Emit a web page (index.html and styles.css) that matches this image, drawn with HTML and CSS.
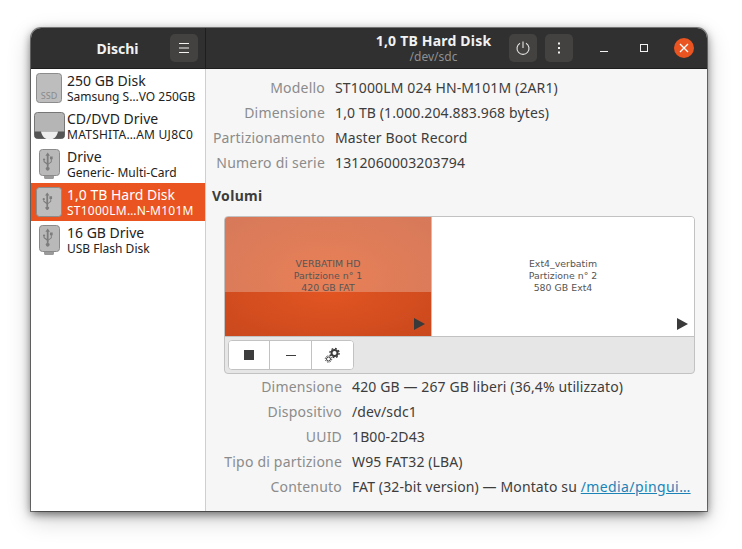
FILE: index.html
```html
<!DOCTYPE html>
<html lang="it">
<head>
<meta charset="utf-8">
<title>Dischi</title>
<link rel="stylesheet" href="styles.css">
</head>
<body>
<div class="window">
    <header class="titlebar">
        <div class="bar-left">
            <span class="app-title">Dischi</span>
            <button class="hbtn">
                <svg width="16" height="16" viewBox="0 0 16 16"><path d="M3 3.500h10M3 8h10M3 12.500h10" stroke="#f2f2f2" stroke-width="1"/></svg>
            </button>
        </div>
        <div class="bar-right">
            <div class="bar-title">
                <div class="disk-name">1,0 TB Hard Disk</div>
                <div class="disk-path">/dev/sdc</div>
            </div>
            <div class="bar-actions">
                <button class="hbtn">
                    <svg width="16" height="16" viewBox="0 0 16 16" fill="none" stroke="#e6e6e6" stroke-width="1.100"><path d="M8 1.500v6.500"/><path d="M5 3.200a6 6 0 1 0 6 0"/></svg>
                </button>
                <button class="hbtn">
                    <svg width="16" height="16" viewBox="0 0 16 16" fill="#f2f2f2"><rect x="7" y="2.500" width="2" height="2"/><rect x="7" y="7" width="2" height="2"/><rect x="7" y="11.500" width="2" height="2"/></svg>
                </button>
                <div class="wm">
                    <span class="wm-btn"><svg width="16" height="16" viewBox="0 0 16 16"><path d="M4 11.500h8" stroke="#f2f2f2" stroke-width="1"/></svg></span>
                    <span class="wm-btn"><svg width="16" height="16" viewBox="0 0 16 16"><rect x="4.500" y="4.500" width="7" height="7" fill="none" stroke="#f2f2f2"/></svg></span>
                    <span class="wm-btn close"><svg width="20" height="20" viewBox="0 0 20 20"><path d="M6 6l8 8M14 6l-8 8" stroke="#fff" stroke-width="1.300"/></svg></span>
                </div>
            </div>
        </div>
    </header>
    <div class="content">
        <aside class="sidebar">
            <div class="device">
                <svg class="dev-icon" width="32" height="32" viewBox="0 0 32 32"><rect x="1.500" y="1.500" width="25" height="29" rx="3" fill="#bdbdbd" stroke="#8c8c8c"/><text x="14" y="27" class="ssd-label">SSD</text></svg>
                <div class="dev-text"><div class="dev-name">250 GB Disk</div><div class="dev-sub">Samsung S…VO 250GB</div></div>
            </div>
            <div class="device">
                <svg class="dev-icon" width="32" height="32" viewBox="0 0 32 32"><path d="M2.500 2.500h24a3 3 0 0 1 3 3v20a3 3 0 0 1-3 3h-24a3 3 0 0 1-3-3v-20a3 3 0 0 1 3-3z" fill="#b5b5b5" stroke="#777"/><path d="M-.500 21.500h30v4a3 3 0 0 1-3 3h-24a3 3 0 0 1-3-3z" fill="#555"/><path d="M6 21.500h17c-1 5-4 8-8.500 8S7 26.500 6 21.500z" fill="#eee"/></svg>
                <div class="dev-text"><div class="dev-name">CD/DVD Drive</div><div class="dev-sub caps">MATSHITA…AM UJ8C0</div></div>
            </div>
            <div class="device">
                <svg class="dev-icon" width="32" height="32" viewBox="0 0 32 32"><use href="#usb-stick"/></svg>
                <div class="dev-text"><div class="dev-name">Drive</div><div class="dev-sub">Generic- Multi-Card</div></div>
            </div>
            <div class="device selected">
                <svg class="dev-icon" width="32" height="32" viewBox="0 0 32 32"><use href="#usb-disk"/></svg>
                <div class="dev-text"><div class="dev-name">1,0 TB Hard Disk</div><div class="dev-sub caps">ST1000LM…N-M101M</div></div>
            </div>
            <div class="device">
                <svg class="dev-icon" width="32" height="32" viewBox="0 0 32 32"><use href="#usb-stick"/></svg>
                <div class="dev-text"><div class="dev-name">16 GB Drive</div><div class="dev-sub">USB Flash Disk</div></div>
            </div>
        </aside>
        <main class="details">
            <dl class="props top-props">
                <dt>Modello</dt><dd>ST1000LM 024 HN-M101M (2AR1)</dd>
                <dt>Dimensione</dt><dd>1,0 TB (1.000.204.883.968 bytes)</dd>
                <dt>Partizionamento</dt><dd>Master Boot Record</dd>
                <dt>Numero di serie</dt><dd>1312060003203794</dd>
            </dl>
            <h2 class="section">Volumi</h2>
            <div class="volumes">
                <div class="vol-map">
                    <div class="part part-fat">
                        <div class="part-used"></div>
                        <div class="part-label">VERBATIM HD<br>Partizione n° 1<br>420 GB FAT</div>
                        <span class="arrow"></span>
                    </div>
                    <div class="part part-ext">
                        <div class="part-label">Ext4_verbatim<br>Partizione n° 2<br>580 GB Ext4</div>
                        <span class="arrow"></span>
                    </div>
                </div>
                <div class="vol-tools">
                    <div class="toolgroup">
                        <button class="tool"><span class="stop"></span></button>
                        <button class="tool"><span class="minus"></span></button>
                        <button class="tool">
                            <svg width="18" height="18" viewBox="0 0 18 18" fill="none" stroke="#3d3d3d"><circle cx="10.500" cy="7" r="3" stroke-width="2"/><circle cx="10.500" cy="7" r="4.600" stroke-width="1.400" stroke-dasharray="1.800 1.800"/><circle cx="4.500" cy="13" r="2" stroke-width="1"/><circle cx="4.500" cy="13" r="3.200" stroke-width="1" stroke-dasharray="1.300 1.200"/></svg>
                        </button>
                    </div>
                </div>
            </div>
            <dl class="props vol-props">
                <dt>Dimensione</dt><dd>420 GB — 267 GB liberi (36,4% utilizzato)</dd>
                <dt>Dispositivo</dt><dd>/dev/sdc1</dd>
                <dt>UUID</dt><dd>1B00-2D43</dd>
                <dt>Tipo di partizione</dt><dd>W95 FAT32 (LBA)</dd>
                <dt>Contenuto</dt><dd>FAT (32-bit version) — Montato su <a href="#">/media/pingui…</a></dd>
            </dl>
        </main>
    </div>
</div>
<svg class="defs" width="0" height="0">
    <symbol id="usb-mark" viewBox="0 0 32 32">
        <path d="M14 5l-2.500 3.500H13v11c0 1 .3 1.500 .3 1.500a2 2 0 1 0 1.400 0s.3-.5 .3-1.500v-1.200l3.500-2.800v-3h1V9.500h-3v3h1v2.300L15 17V8.500h1.500z M10 11.500a1.300 1.300 0 1 0 0 2.600 1.300 1.300 0 0 0 0-2.600z M9.400 14l.1 1.500 3.500 2.800v-1.800l-2.400-2z" fill="#7c7c7c"/>
    </symbol>
    <symbol id="usb-stick" viewBox="0 0 32 32">
        <path d="M9 27h10v2.500a1.500 1.500 0 0 1-1.500 1.500h-7A1.500 1.500 0 0 1 9 29.500z" fill="#9a9a9a"/>
        <rect x="4.500" y="1.500" width="20" height="26" rx="3" fill="#b9b9b9" stroke="#8a8a8a"/>
        <use href="#usb-mark" x="0" y="0" width="29" height="29"/>
    </symbol>
    <symbol id="usb-disk" viewBox="0 0 32 32">
        <rect x="1.500" y="1.500" width="25" height="29" rx="3" fill="#bdbdbd" stroke="#8c8c8c"/>
        <use href="#usb-mark" x="0" y="2" width="28" height="28"/>
    </symbol>
</svg>
</body>
</html>
```

FILE: styles.css
```css
* {
    margin: 0;
    padding: 0;
    box-sizing: border-box;
}

body {
    background: #fff;
    padding: 28px 35px 38px 31px;
    font-family: "Noto Sans", sans-serif;
    font-size: 14px;
    color: #3d3d3d;
    overflow: hidden;
}

.defs {
    position: absolute;
}

.window {
    width: 676px;
    height: 483px;
    border-radius: 10px 10px 0 0;
    overflow: hidden;
    background: #f6f6f6;
    box-shadow: 0 0 0 1px rgba(0,0,0,0.45), 0 3px 10px rgba(0,0,0,0.55), 0 8px 24px rgba(0,0,0,0.2);
    display: flex;
    flex-direction: column;
}

/* header */
.titlebar {
    height: 41px;
    flex: none;
    display: flex;
    background: #303030;
    color: #f2f2f2;
    border-bottom: 1px solid #1e1e1e;
}

.bar-left {
    width: 175px;
    flex: none;
    display: flex;
    align-items: center;
    border-right: 1px solid #1e1e1e;
    padding-right: 7px;
}

.app-title {
    flex: 1;
    text-align: center;
    font-weight: 700;
    font-size: 14px;
    padding-left: 34px;
}

.hbtn {
    width: 28px;
    height: 28px;
    border: none;
    border-radius: 5px;
    background: #444241;
    display: flex;
    align-items: center;
    justify-content: center;
}

.bar-right {
    flex: 1;
    display: flex;
    align-items: center;
}

.bar-title {
    margin-left: 168px;
    width: 119px;
    text-align: center;
    white-space: nowrap;
}

.disk-name {
    font-weight: 700;
    font-size: 14px;
    line-height: 18px;
    letter-spacing: 0.2px;
}

.disk-path {
    font-size: 12px;
    line-height: 14px;
    color: #8f8f8f;
}

.bar-actions {
    display: flex;
    align-items: center;
    gap: 8px;
    margin-left: 16px;
}

.wm {
    display: flex;
    align-items: center;
    margin-left: 13px;
    gap: 20px;
}

.wm-btn {
    width: 20px;
    height: 20px;
    display: flex;
    align-items: center;
    justify-content: center;
}

.wm-btn.close {
    border-radius: 50%;
    background: #e95420;
}

/* sidebar */
.content {
    flex: 1;
    display: flex;
    min-height: 0;
}

.sidebar {
    width: 175px;
    flex: none;
    background: #fff;
    border-right: 1px solid #cfcfcf;
}

.device {
    height: 38px;
    display: flex;
    align-items: center;
    padding-left: 4px;
    color: #222;
}

.device.selected {
    background: #e95420;
    color: #fff;
}

.dev-icon {
    flex: none;
    overflow: visible;
}

.dev-name {
    font-size: 14px;
    line-height: 16px;
}

.dev-sub {
    font-size: 12px;
    line-height: 15px;
    white-space: nowrap;
}

.dev-sub.caps {
    letter-spacing: 0.25px;
}

.ssd-label {
    font-family: "Noto Sans", sans-serif;
    font-size: 9px;
    fill: #8a8a8a;
    text-anchor: middle;
}

/* details */
.details {
    flex: 1;
    padding: 6px 12px 0 6px;
}

.props {
    display: grid;
    line-height: 25px;
    white-space: nowrap;
}

.props dt {
    text-align: right;
    color: #8b8b8b;
    letter-spacing: 0.2px;
}

.top-props {
    grid-template-columns: 113px 1fr;
    column-gap: 10px;
}

.vol-props {
    grid-template-columns: 130px 1fr;
    column-gap: 10px;
}

.props dd {
    color: #3d3d3d;
    letter-spacing: 0.12px;
}

.props a {
    color: #1b83b6;
    letter-spacing: 0.4px;
}

.section {
    font-size: 14px;
    font-weight: 700;
    line-height: 18px;
    margin-top: 12px;
    color: #3d3d3d;
    letter-spacing: 0.3px;
}

.volumes {
    margin: 11px 0 0 12px;
    height: 158px;
    border: 1px solid #c2c2c2;
    border-radius: 4px;
    overflow: hidden;
    background: #e6e6e6;
}

.vol-map {
    height: 120px;
    display: flex;
    border-bottom: 1px solid #c2c2c2;
    font-family: "DejaVu Sans", sans-serif;
    font-size: 9.400px;
    line-height: 12px;
}

.part {
    position: relative;
    display: flex;
    align-items: center;
    justify-content: center;
    text-align: center;
    padding-bottom: 2px;
}

.part-fat {
    width: 207px;
    border-right: 1px solid #c2c2c2;
    background: radial-gradient(ellipse at center, #e88057, #d6795a);
}

.part-ext {
    flex: 1;
    background: #fff;
}

.part-used {
    position: absolute;
    left: 0;
    right: 0;
    bottom: 0;
    height: 44px;
    background: radial-gradient(ellipse at center top, #e25522, #c9481d);
}

.part-label {
    position: relative;
    color: #555;
}

.arrow {
    position: absolute;
    right: 6px;
    bottom: 6px;
    border-left: 11px solid #3a3a3a;
    border-top: 6px solid transparent;
    border-bottom: 6px solid transparent;
}

.vol-tools {
    padding: 3px;
}

.toolgroup {
    display: inline-flex;
    height: 30px;
    border: 1px solid #c2c2c2;
    border-radius: 4px;
    background: #fff;
    overflow: hidden;
}

.tool {
    width: 42px;
    border: none;
    border-right: 1px solid #c2c2c2;
    background: #fff;
    display: flex;
    align-items: center;
    justify-content: center;
}

.tool:first-child {
    width: 41px;
}

.tool:last-child {
    border-right: none;
    width: 41px;
}

.stop {
    width: 10px;
    height: 10px;
    background: #3d3d3d;
}

.minus {
    width: 10px;
    height: 1px;
    background: #3d3d3d;
}
```
